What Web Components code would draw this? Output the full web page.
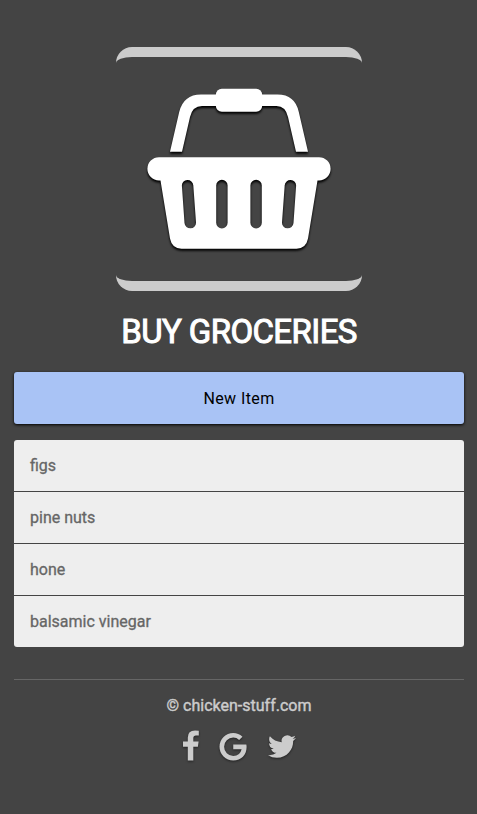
<!DOCTYPE html>
<html lang="en">
<head>
<meta charset="utf-8">
<title>Buy Groceries</title>
<style>
html{background:#444}
body{margin:0;font:16px/20px Roboto,sans-serif;color:#ccc}
</style>
</head>
<body>
<grocery-app></grocery-app>
<script>
const define = (name, html) => customElements.define(name, class extends HTMLElement {
  constructor() {
    super();
    this.attachShadow({mode: 'open'}).innerHTML = html;
  }
});

define('basket-logo', `
<style>
:host{display:block;box-sizing:border-box;width:246px;height:244px;border:0 solid #ccc;border-width:10px 0;border-radius:16px}
svg{display:block;filter:drop-shadow(0 2px 1px #000)}
</style>
<svg width="246" height="224" viewBox="116 57 246 224" fill="#fff">
<path d="M170 151.7 179.2 112Q183.5 94.5 201 94.5H277.5Q295 94.5 298.8 112L308 151.7H296L288 117Q285.5 106 276.5 106H202Q192.500 106 190 117L182 151.700Z"/>
<rect x="215.800" y="88.700" width="46.400" height="23" rx="6"/>
<path fill-rule="evenodd" d="M159 157.200H319A11.600 11.600 0 0 1 319 180.400H317.500L308 238.500Q306 248.700 296.500 248.700H181.500Q172 248.700 170 238.500L160.500 180.400H159A11.600 11.600 0 0 1 159 157.200ZM181.900 186 184.500 223A5.700 5.700 0 0 0 196 222.200L193.300 185.300A5.700 5.700 0 0 0 181.900 186ZM216.200 185.500V222.800A5.700 5.700 0 0 0 227.600 222.800V185.500A5.700 5.700 0 0 0 216.200 185.500ZM250.400 185.500V222.800A5.700 5.700 0 0 0 261.800 222.800V185.500A5.700 5.700 0 0 0 250.400 185.500ZM284.700 185.300 282 222.200A5.700 5.700 0 0 0 293.500 223L296.100 186A5.700 5.700 0 0 0 284.700 185.300Z"/>
</svg>`);

define('new-item-button', `
<style>
:host{display:block}
button{display:block;width:100%;height:52px;border:0;border-radius:3px;background:#a9c3f5;color:#000;font:16px Roboto,sans-serif;letter-spacing:.4px;padding:0;box-shadow:0 1px 3px #000}
</style>
<button><slot></slot></button>`);

define('grocery-list', `
<style>
:host{display:flex;flex-direction:column;gap:1px;border-radius:3px;overflow:hidden}
</style><slot></slot>`);

define('grocery-item', `
<style>
:host{display:flex;align-items:center;box-sizing:border-box;height:51px;padding:0 16px;background:#eee;color:#666;-webkit-text-stroke:.3px #666}
</style><span><slot></slot></span>`);

define('social-links', `
<style>
:host{display:flex;align-items:flex-start;justify-content:center}
svg{display:block;filter:drop-shadow(0 1px 1px #222);fill:#ccc;overflow:visible}
.g{margin:3px 0 0 20px}.t{margin:5px 0 0 21px}
</style>
<svg width="16" height="30" viewBox="0 -.5 16 30"><path d="M15.800.2V5H13Q10.300 5 10.300 7.600V11H15.600L14.900 16.300H10.300V30H4.800V16.300H0V11H4.800V7Q4.800 0 12 0Q14.500 0 15.800.2Z"/></svg>
<svg class="g" width="28" height="28" viewBox="-.5 0 28.500 28.500"><path d="M14 11.700H27.300Q27.600 12.900 27.600 14.300C27.600 22.300 22.200 28 14 28A14 14 0 0 1 14 0Q19.400 0 23.400 3.700L20 7.100Q17.400 4.700 14 4.700A9.300 9.300 0 0 0 14 23.300Q21 23.300 22.500 16.500H14Z"/></svg>
<svg class="t" width="28" height="23" viewBox="0 2 24 20" preserveAspectRatio="none"><path d="M23.953 4.570a10 10 0 0 1-2.825.775 4.958 4.958 0 0 0 2.163-2.723c-.951.555-2.005.959-3.127 1.184a4.920 4.920 0 0 0-8.384 4.482C7.690 8.095 4.067 6.130 1.640 3.162a4.822 4.822 0 0 0-.666 2.475c0 1.710.870 3.213 2.188 4.096a4.904 4.904 0 0 1-2.228-.616v.060a4.923 4.923 0 0 0 3.946 4.827 4.996 4.996 0 0 1-2.212.085 4.936 4.936 0 0 0 4.604 3.417 9.867 9.867 0 0 1-6.102 2.105c-.390 0-.779-.023-1.170-.067a13.995 13.995 0 0 0 7.557 2.209c9.053 0 13.998-7.496 13.998-13.985 0-.210 0-.420-.015-.630A9.935 9.935 0 0 0 24 4.590z"/></svg>`);

define('page-footer', `
<style>
:host{display:block;border-top:1px solid #666;text-align:center}
div{padding:16px 0 14px;-webkit-text-stroke:.4px #ccc}
</style>
<div><slot></slot></div><social-links></social-links>`);

define('grocery-app', `
<style>
:host{display:block;box-sizing:border-box;height:814px;padding:47px 13px 0 14px;background:#444}
basket-logo{margin:0 auto}
h1{margin:21px 0 20px;font-size:33px;line-height:40px;font-weight:400;text-align:center;color:#fff;letter-spacing:-.6px;-webkit-text-stroke:1px #fff}
grocery-list{margin:16px 0 32px}
</style>
<basket-logo></basket-logo>
<h1>BUY GROCERIES</h1>
<new-item-button>New Item</new-item-button>
<grocery-list>
<grocery-item>figs</grocery-item>
<grocery-item>pine nuts</grocery-item>
<grocery-item>hone</grocery-item>
<grocery-item>balsamic vinegar</grocery-item>
</grocery-list>
<page-footer>© chicken-stuff.com</page-footer>`);
</script>
</body>
</html>
